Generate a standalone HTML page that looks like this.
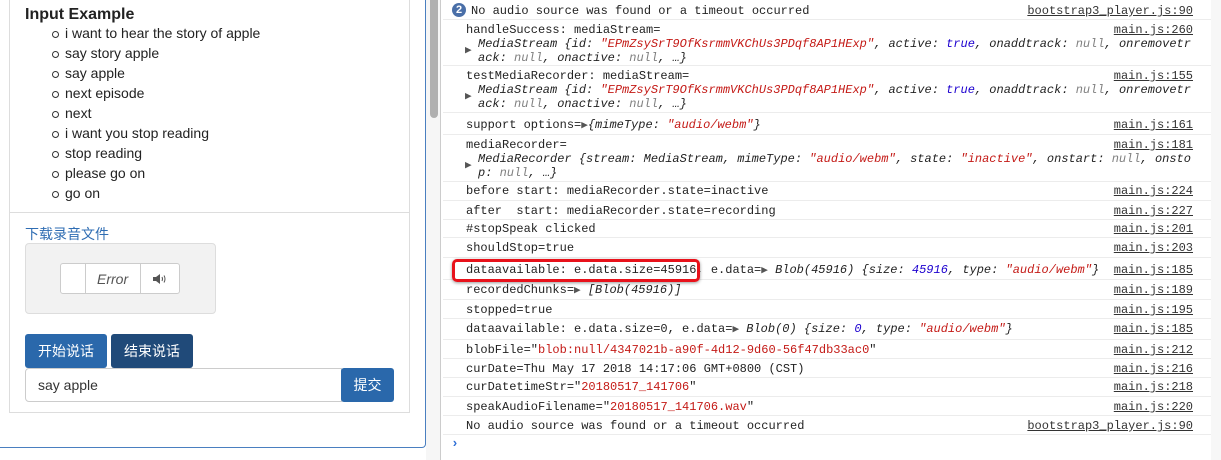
<!DOCTYPE html>
<html><head><meta charset="utf-8"><style>
*{margin:0;padding:0;box-sizing:border-box}
body{width:1221px;height:460px;overflow:hidden;background:#fff;position:relative;font-family:"Liberation Sans","Noto Sans CJK SC",sans-serif;color:#222}
.abs{position:absolute}
.row{position:absolute;left:443px;width:768px;border-bottom:1px solid #ececec;font-family:"Liberation Mono",monospace;font-size:12px;color:#222;white-space:pre;line-height:14px}
.row .t{position:absolute;left:23px}
.row .l{position:absolute;right:18px;text-decoration:underline;color:#333}
.s{color:#c41a16}.n{color:#1c00cf}.i{font-style:italic}.g{color:#808080}
.tri{font-size:11px;color:#555}
li{list-style:none;position:relative;height:20px;line-height:20px;font-size:14px}
li:before{content:"";position:absolute;left:-13px;top:8px;width:5px;height:5px;border:1px solid #333;border-radius:50%}
.btn{position:absolute;color:#fff;font-size:14px;text-align:center;border-radius:3px;font-family:"Liberation Sans","Noto Sans CJK SC",sans-serif}
</style></head><body>
<div class="abs" style="left:0;top:-5px;width:426px;height:453px;border:1px solid #4a7fc0;border-left:none;border-radius:0 0 4px 0"></div>
<div class="abs" style="left:9px;top:-2px;width:401px;height:415px;border:1px solid #ddd"></div>
<div class="abs" style="left:10px;top:212px;width:399px;height:1px;background:#ddd"></div>
<div class="abs" style="left:25px;top:6px;font-size:16px;font-weight:bold;color:#222">Input Example</div>
<ul class="abs" style="left:65px;top:23px">
<li>i want to hear the story of apple</li><li>say story apple</li><li>say apple</li><li>next episode</li><li>next</li><li>i want you stop reading</li><li>stop reading</li><li>please go on</li><li>go on</li></ul>
<div class="abs" style="left:25px;top:224px;font-size:14px;color:#2f6db3">下载录音文件</div>
<div class="abs" style="left:25px;top:243px;width:191px;height:71px;background:#f2f2f2;border:1px solid #ddd;border-radius:4px"></div>
<div class="abs" style="left:60px;top:263px;width:120px;height:31px;background:#fff;border:1px solid #ccc;border-radius:3px"></div>
<div class="abs" style="left:85px;top:264px;width:1px;height:29px;background:#ccc"></div>
<div class="abs" style="left:140px;top:264px;width:1px;height:29px;background:#ccc"></div>
<div class="abs" style="left:97px;top:271px;font-size:14px;font-style:italic;color:#555">Error</div>
<svg class="abs" style="left:153px;top:274px" width="14" height="10" viewBox="0 0 14 10"><path d="M0 3h3l4-3v10l-4-3H0z" fill="#555"/><path d="M9 3q1 2 0 4M11 1.5q2 3.5 0 7" stroke="#555" fill="none"/></svg>
<div class="btn" style="left:25px;top:334px;width:82px;height:34px;line-height:34px;background:#2a68ab">开始说话</div>
<div class="btn" style="left:111px;top:334px;width:82px;height:34px;line-height:34px;background:#204a79">结束说话</div>
<div class="abs" style="left:25px;top:368px;width:317px;height:34px;border:1px solid #ccc;border-radius:4px 0 0 4px;font-size:14px;line-height:32px;padding-left:12px;color:#333">say apple</div>
<div class="btn" style="left:341px;top:368px;width:53px;height:34px;line-height:34px;background:#2a68ab">提交</div>
<div class="abs" style="left:426px;top:0;width:15px;height:460px;background:#f6f6f6;border-right:1px solid #ccc"></div>
<div class="abs" style="left:430px;top:-5px;width:8px;height:123px;background:#b0b0b0;border-radius:4px"></div>
<div class="abs" style="left:1211px;top:0;width:10px;height:460px;background:#f7f7f7"></div>
<div class="row" style="top:0;height:20px"><span class="abs" style="left:9px;top:3px;width:14px;height:14px;border-radius:50%;background:#4a6fa8;color:#fff;font-family:'Liberation Sans';font-size:11px;font-weight:bold;text-align:center;line-height:14px">2</span><span class="t" style="left:28px;top:4px">No audio source was found or a timeout occurred</span><span class="l" style="top:4px">bootstrap3_player.js:90</span></div>
<div class="row" style="top:20px;height:46px"><span class="t" style="top:3px">handleSuccess: mediaStream=</span><span class="t" style="top:23px;left:22px" ><span class="tri">▶</span></span><span class="t i" style="top:17px;left:35px">MediaStream {id: <span class="s">"EPmZsySrT9OfKsrmmVKChUs3PDqf8AP1HExp"</span>, active: <span class="n">true</span>, onaddtrack: <span class="g">null</span>, onremovetr
ack: <span class="g">null</span>, onactive: <span class="g">null</span>, …}</span><span class="l" style="top:3px">main.js:260</span></div>
<div class="row" style="top:66px;height:47px"><span class="t" style="top:3px">testMediaRecorder: mediaStream=</span><span class="t" style="top:23px;left:22px"><span class="tri">▶</span></span><span class="t i" style="top:17px;left:35px">MediaStream {id: <span class="s">"EPmZsySrT9OfKsrmmVKChUs3PDqf8AP1HExp"</span>, active: <span class="n">true</span>, onaddtrack: <span class="g">null</span>, onremovetr
ack: <span class="g">null</span>, onactive: <span class="g">null</span>, …}</span><span class="l" style="top:3px">main.js:155</span></div>
<div class="row" style="top:113px;height:22px"><span class="t" style="top:5px">support options=<span class="tri">▶</span><span class="i">{mimeType: <span class="s">"audio/webm"</span>}</span></span><span class="l" style="top:5px">main.js:161</span></div>
<div class="row" style="top:135px;height:47px"><span class="t" style="top:3px">mediaRecorder=</span><span class="t" style="top:23px;left:22px"><span class="tri">▶</span></span><span class="t i" style="top:17px;left:35px">MediaRecorder {stream: MediaStream, mimeType: <span class="s">"audio/webm"</span>, state: <span class="s">"inactive"</span>, onstart: <span class="g">null</span>, onsto
p: <span class="g">null</span>, …}</span><span class="l" style="top:3px">main.js:181</span></div>
<div class="row" style="top:182px;height:19px"><span class="t" style="top:2px">before start: mediaRecorder.state=inactive</span><span class="l" style="top:2px">main.js:224</span></div>
<div class="row" style="top:201px;height:19px"><span class="t" style="top:3px">after  start: mediaRecorder.state=recording</span><span class="l" style="top:3px">main.js:227</span></div>
<div class="row" style="top:220px;height:18px"><span class="t" style="top:2px">#stopSpeak clicked</span><span class="l" style="top:2px">main.js:201</span></div>
<div class="row" style="top:238px;height:20px"><span class="t" style="top:3px">shouldStop=true</span><span class="l" style="top:3px">main.js:203</span></div>
<div class="row" style="top:258px;height:22px"><span class="t" style="top:5px">dataavailable: e.data.size=45916, e.data=<span class="tri">▶</span> <span class="i">Blob(45916) {size: <span class="n">45916</span>, type: <span class="s">"audio/webm"</span>}</span></span><span class="l" style="top:5px">main.js:185</span></div>
<div class="abs" style="left:452px;top:259px;width:248px;height:23px;border:3px solid #e8121b;border-radius:5px;box-shadow:0 1px 3px rgba(0,0,0,.4)"></div>
<div class="row" style="top:280px;height:20px"><span class="t" style="top:3px">recordedChunks=<span class="tri">▶</span> <span class="i">[Blob(45916)]</span></span><span class="l" style="top:3px">main.js:189</span></div>
<div class="row" style="top:300px;height:19px"><span class="t" style="top:3px">stopped=true</span><span class="l" style="top:3px">main.js:195</span></div>
<div class="row" style="top:319px;height:21px"><span class="t" style="top:3px">dataavailable: e.data.size=0, e.data=<span class="tri">▶</span> <span class="i">Blob(0) {size: <span class="n">0</span>, type: <span class="s">"audio/webm"</span>}</span></span><span class="l" style="top:3px">main.js:185</span></div>
<div class="row" style="top:340px;height:19px"><span class="t" style="top:3px">blobFile="<span class="s">blob:null/4347021b-a90f-4d12-9d60-56f47db33ac0</span>"</span><span class="l" style="top:3px">main.js:212</span></div>
<div class="row" style="top:359px;height:19px"><span class="t" style="top:3px">curDate=Thu May 17 2018 14:17:06 GMT+0800 (CST)</span><span class="l" style="top:3px">main.js:216</span></div>
<div class="row" style="top:378px;height:19px"><span class="t" style="top:2px">curDatetimeStr="<span class="s">20180517_141706</span>"</span><span class="l" style="top:2px">main.js:218</span></div>
<div class="row" style="top:397px;height:19px"><span class="t" style="top:3px">speakAudioFilename="<span class="s">20180517_141706.wav</span>"</span><span class="l" style="top:3px">main.js:220</span></div>
<div class="row" style="top:416px;height:19px"><span class="t" style="top:3px">No audio source was found or a timeout occurred</span><span class="l" style="top:3px">bootstrap3_player.js:90</span></div>
<div class="abs" style="left:451px;top:436px;color:#2f6fd6;font-family:'Liberation Mono';font-size:13px;font-weight:bold">›</div>
</body></html>
